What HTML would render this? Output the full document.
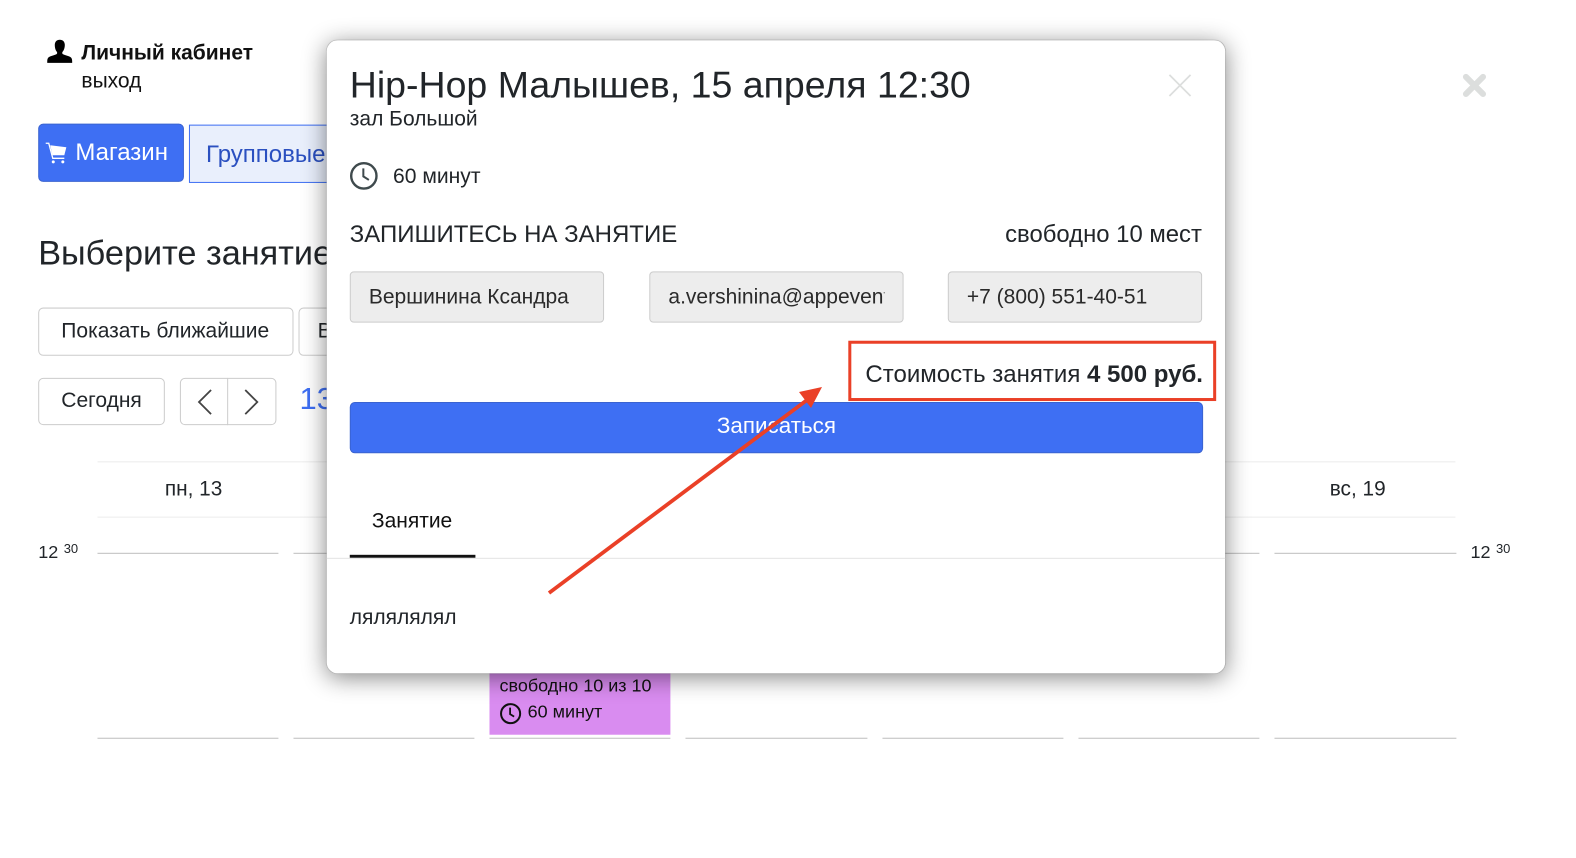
<!DOCTYPE html>
<html lang="ru">
<head>
<meta charset="utf-8">
<title>Hip-Hop</title>
<style>
html,body{margin:0;padding:0;background:#fff}
body{width:1576px;height:858px;position:relative;overflow:hidden;font-family:"Liberation Sans","Noto Sans CJK SC",sans-serif;color:#212529}
#w{position:absolute;left:0;top:0;width:1568px;height:854px;transform:scale(1.0051);transform-origin:0 0}
.a{position:absolute;white-space:nowrap}
.btn{position:absolute;box-sizing:border-box;background:#fff;border:1px solid #ccc;border-radius:5px}
.line{position:absolute;height:1px;background:#bdbdbd}
.hl{position:absolute;height:1px;background:#ececec}
.inp{position:absolute;box-sizing:border-box;top:270px;height:50.500px;width:253px;background:#ededed;border:1px solid #ccc;border-radius:4px;font-size:20.900px;line-height:50px;padding:0 18px;color:#2a2a2a}
.inp div{overflow:hidden;white-space:nowrap}
#modal{position:absolute;left:325px;top:40px;width:894px;height:630px;background:#fff;border-radius:11px;box-shadow:0 0 1px rgba(0,0,0,.4),0 4px 24px rgba(0,0,0,.48)}
</style>
</head>
<body>
<div id="w">
<svg class="a" style="left:46px;top:39px" width="27" height="24" viewBox="0 0 27 24"><path fill="#000" d="M13.500 0.500c3 0 5 2 5 5.300 0 2.800-.9 5.200-2.200 6.700-.6.700-.5 1.900.2 2.400 1.800 1.100 6.200 1.800 8 3.200.8.700 1.300 1.900 1.300 3.900v1.500H1v-1.500c0-2 .5-3.200 1.300-3.900 1.800-1.400 6.200-2.100 8-3.200.7-.5.8-1.700.2-2.400C9.200 11 8.500 8.600 8.500 5.800c0-3.300 2-5.300 5-5.300z"/></svg>
<div class="a" style="left:81px;top:41px;font-size:20.900px;line-height:24px;font-weight:700;color:#111">Личный кабинет</div>
<div class="a" style="left:81px;top:69px;font-size:20.900px;line-height:24px;color:#111">выход</div>

<div class="btn" style="left:38px;top:123px;width:145px;height:58px;background:#3e6ff3;border-color:#3a63d0;border-radius:5px"></div>
<svg class="a" style="left:45px;top:141px" width="22" height="23" viewBox="0 0 22 23"><path fill="none" stroke="#fff" stroke-width="1.300" d="M0.500 1.500H3.500L7.500 16.500H19"/><path fill="#fff" d="M5 3.500L21 5.500 19 13.500H7.200z"/><circle cx="8" cy="20" r="1.500" fill="#fff"/><circle cx="17.500" cy="20" r="1.500" fill="#fff"/></svg>
<div class="a" style="left:75px;top:137px;font-size:23.880px;line-height:30px;color:#fff">Магазин</div>
<div class="btn" style="left:188px;top:124px;width:160px;height:58px;background:#e9effc;border:1px solid #3e6ff3;border-radius:0"></div>
<div class="a" style="left:205px;top:138.500px;font-size:23.880px;line-height:30px;color:#2b50c0">Групповые</div>

<div class="a" style="left:38px;top:232px;font-size:34.100px;line-height:40px;color:#212529">Выберите занятие</div>

<div class="btn" style="left:38px;top:306px;width:254px;height:48px"></div>
<div class="a" style="left:61px;top:318px;font-size:20.900px;line-height:24px">Показать ближайшие</div>
<div class="btn" style="left:297px;top:306px;width:60px;height:48px"></div>
<div class="a" style="left:316px;top:318px;font-size:20.900px;line-height:24px">В</div>

<div class="btn" style="left:38px;top:376px;width:126px;height:47px"></div>
<div class="a" style="left:61px;top:387px;font-size:20.900px;line-height:24px">Сегодня</div>
<div class="btn" style="left:179px;top:376px;width:96px;height:47px"></div>
<div class="a" style="left:226px;top:376px;width:1px;height:47px;background:#ccc"></div>
<svg class="a" style="left:195px;top:385.500px" width="66" height="28" viewBox="0 0 66 28"><path d="M15 2L3 14l12 12M49 2l12 12-12 12" fill="none" stroke="#444" stroke-width="1.800"/></svg>
<div class="a" style="left:298px;top:379px;font-size:30.800px;line-height:36px;color:#3e6ff3">13</div>

<div class="hl" style="left:97px;top:459px;width:1351px"></div>
<div class="hl" style="left:97px;top:514px;width:1351px"></div>
<div class="a" style="left:164px;top:475px;font-size:20.700px;line-height:24px">пн, 13</div>
<div class="a" style="left:1323px;top:475px;font-size:20.700px;line-height:24px">вс, 19</div>

<div class="a" style="left:38px;top:537.500px;font-size:17.900px;line-height:22px">12 <span style="font-size:12.900px;position:relative;top:-5px;left:.5px">30</span></div>
<div class="a" style="left:1463px;top:537.500px;font-size:17.900px;line-height:22px">12 <span style="font-size:12.900px;position:relative;top:-5px;left:.5px">30</span></div>

<div class="line" style="left:97px;top:550px;width:180px"></div>
<div class="line" style="left:292px;top:550px;width:180px"></div>
<div class="line" style="left:1073px;top:550px;width:180px"></div>
<div class="line" style="left:1268px;top:550px;width:181px"></div>
<div class="line" style="left:97px;top:734px;width:180px"></div>
<div class="line" style="left:292px;top:734px;width:180px"></div>
<div class="line" style="left:487px;top:734px;width:180px"></div>
<div class="line" style="left:682px;top:734px;width:181px"></div>
<div class="line" style="left:878px;top:734px;width:180px"></div>
<div class="line" style="left:1073px;top:734px;width:180px"></div>
<div class="line" style="left:1268px;top:734px;width:181px"></div>

<div class="a" style="left:486.500px;top:600px;width:180px;height:131px;background:#d98cf0"></div>
<div class="a" style="left:497px;top:671px;font-size:17.900px;line-height:22px;color:#111">свободно 10 из 10</div>
<svg class="a" style="left:497px;top:698.500px" width="22" height="22" viewBox="0 0 22 22"><circle cx="11" cy="11" r="9.500" fill="none" stroke="#111" stroke-width="2"/><path d="M10.500 5v6.500l4 2.500" fill="none" stroke="#111" stroke-width="1.800"/></svg>
<div class="a" style="left:525px;top:696.500px;font-size:17.900px;line-height:22px;color:#111">60 минут</div>

<svg class="a" style="left:1454px;top:72px" width="26" height="26" viewBox="0 0 26 26"><path d="M4.500 4.500l17 17M21.500 4.500l-17 17" stroke="#dcdedd" stroke-width="6" stroke-linecap="round"/></svg>

<div id="modal"></div>

<div class="a" style="left:348px;top:62px;font-size:37.300px;line-height:44px;color:#212529">Hip-Hop Малышев, 15 апреля 12:30</div>
<div class="a" style="left:348px;top:107px;font-size:20.900px;line-height:24px">зал Большой</div>
<svg class="a" style="left:1161px;top:72px" width="26" height="26" viewBox="0 0 26 26"><path d="M2.500 2.500l21 21M23.500 2.500l-21 21" stroke="#dcdedd" stroke-width="1.700"/></svg>

<svg class="a" style="left:348px;top:161px" width="28" height="28" viewBox="0 0 28 28"><circle cx="14" cy="14" r="12.600" fill="none" stroke="#3f4a4d" stroke-width="2.400"/><path d="M13.500 6.500v8l5.500 3.500" fill="none" stroke="#3f4a4d" stroke-width="2"/></svg>
<div class="a" style="left:391px;top:164px;font-size:21px;line-height:24px">60 минут</div>

<div class="a" style="left:348px;top:219px;font-size:23.880px;line-height:30px">ЗАПИШИТЕСЬ НА ЗАНЯТИЕ</div>
<div class="a" style="left:1000px;top:220px;font-size:23.750px;line-height:28px">свободно 10 мест</div>

<div class="inp" style="left:348px"><div>Вершинина Ксандра</div></div>
<div class="inp" style="left:646px"><div>a.vershinina@appevent.ru</div></div>
<div class="inp" style="left:943px"><div>+7 (800) 551-40-51</div></div>

<div class="a" style="left:861px;top:359px;font-size:23.900px;line-height:28px;">Стоимость занятия <b>4 500 руб.</b></div>

<div class="a" style="left:348px;top:400px;width:849px;height:51px;box-sizing:border-box;background:#3e6ff3;border:1px solid #3a63d0;border-radius:5px;color:#fff;font-size:22.300px;line-height:45px;text-align:center">Записаться</div>
<div class="a" style="left:844px;top:339px;width:366px;height:60px;box-sizing:border-box;border:3.500px solid #ea4027"></div>

<div class="a" style="left:370px;top:506.500px;font-size:20.900px;line-height:24px;color:#111">Занятие</div>
<div class="a" style="left:348px;top:552px;width:125px;height:3px;background:#111"></div>
<div class="a" style="left:325px;top:555px;width:894px;height:1px;background:#e3e3e3"></div>
<div class="a" style="left:348px;top:603px;font-size:20.900px;line-height:24px">лялялялял</div>
</div>

<svg class="a" style="left:530px;top:370px" width="300" height="230" viewBox="0 0 300 230"><path d="M19 223L277 30" stroke="#ea4027" stroke-width="3.800" fill="none"/><path d="M292 17L269 22L281 38z" fill="#ea4027"/></svg>
</body>
</html>
